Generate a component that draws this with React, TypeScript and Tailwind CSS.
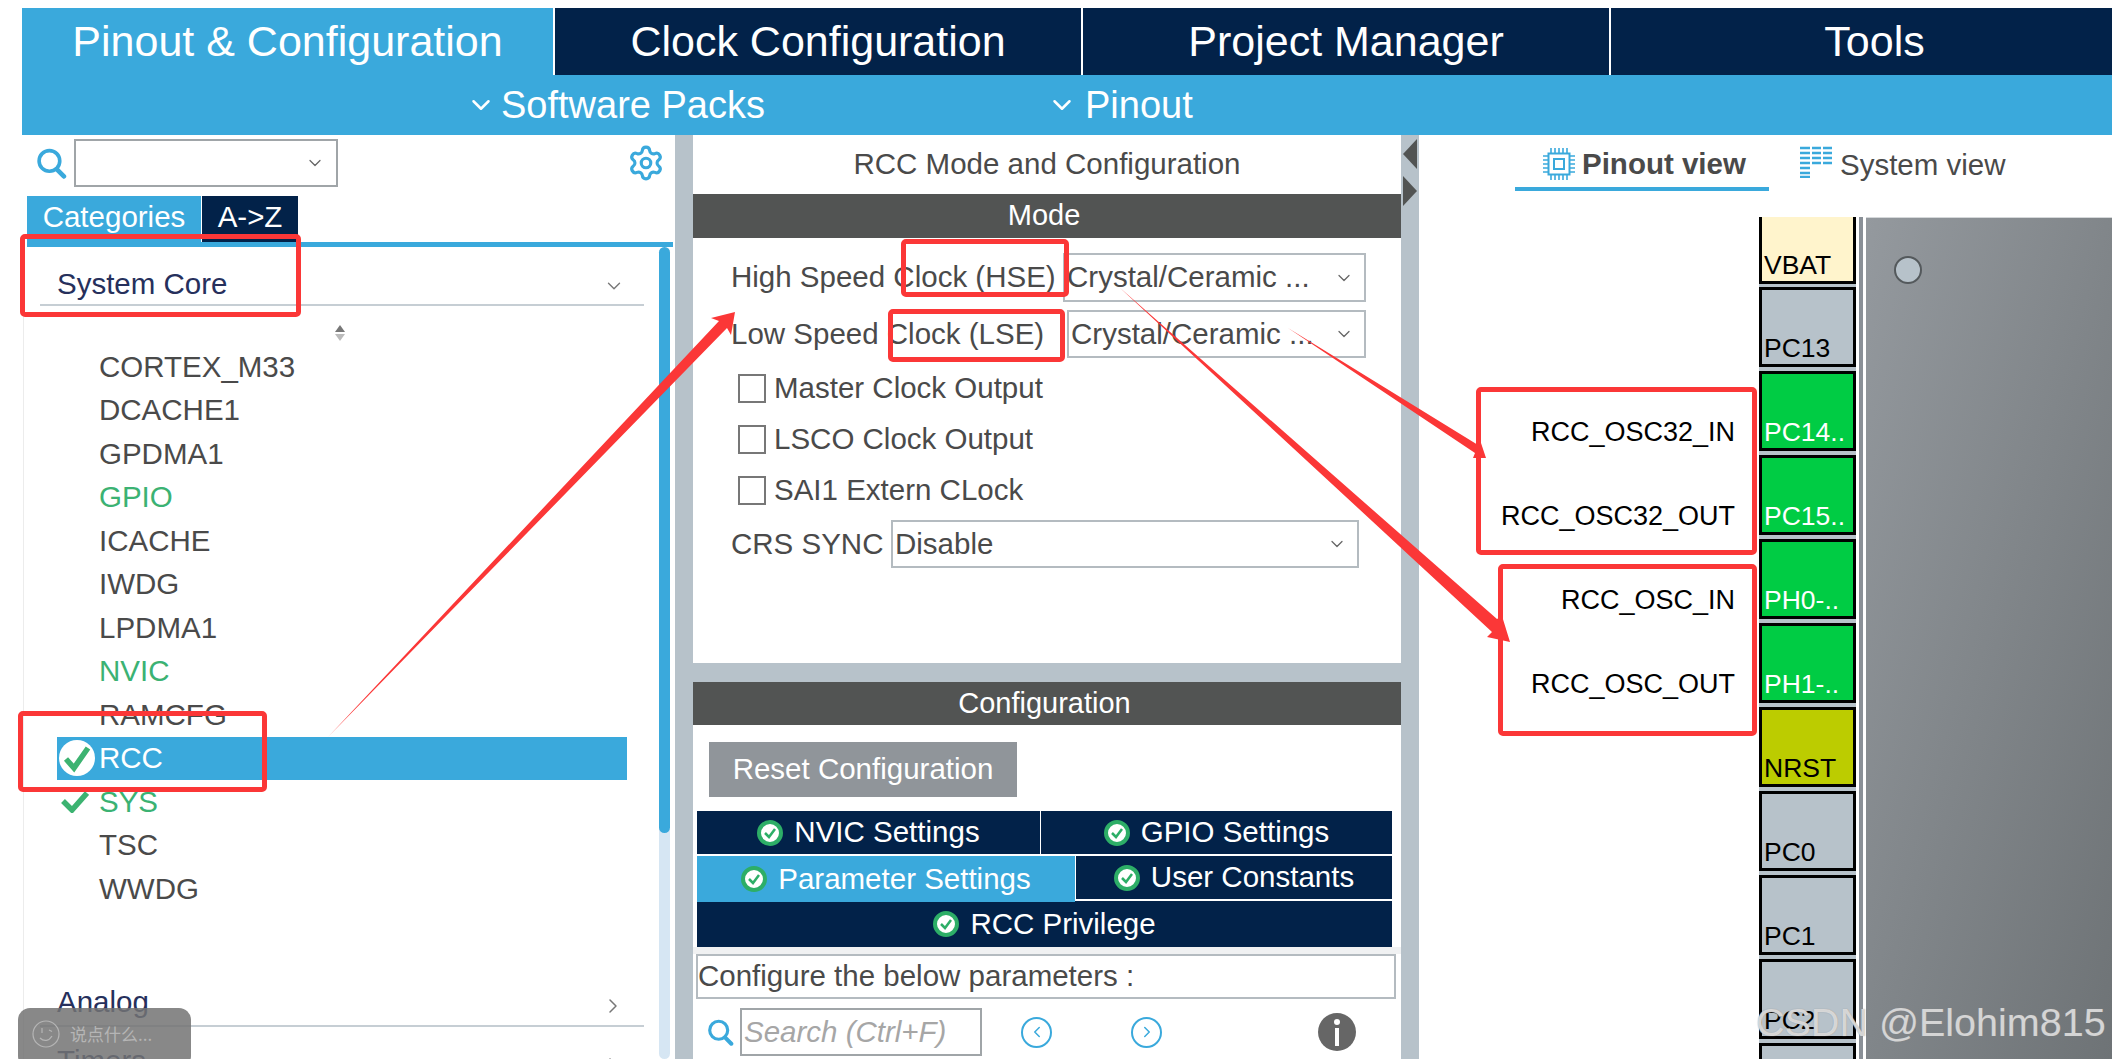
import { ChevronDown, ChevronLeft, ChevronRight, Settings } from 'lucide-react';

const peripherals = [
  { name: 'CORTEX_M33' },
  { name: 'DCACHE1' },
  { name: 'GPDMA1' },
  { name: 'GPIO', green: true },
  { name: 'ICACHE' },
  { name: 'IWDG' },
  { name: 'LPDMA1' },
  { name: 'NVIC', green: true },
  { name: 'RAMCFG' },
  { name: 'RCC', selected: true },
  { name: 'SYS', green: true, checked: true },
  { name: 'TSC' },
  { name: 'WWDG' },
];

const pins = [
  { name: 'VBAT', fill: 'bg-[#fff4cc]', first: true },
  { name: 'PC13', fill: 'bg-[#b7c2ca]' },
  { name: 'PC14..', fill: 'bg-[#00cc44]', light: true, signal: 'RCC_OSC32_IN' },
  { name: 'PC15..', fill: 'bg-[#00cc44]', light: true, signal: 'RCC_OSC32_OUT' },
  { name: 'PH0-..', fill: 'bg-[#00cc44]', light: true, signal: 'RCC_OSC_IN' },
  { name: 'PH1-..', fill: 'bg-[#00cc44]', light: true, signal: 'RCC_OSC_OUT' },
  { name: 'NRST', fill: 'bg-[#bccc00]' },
  { name: 'PC0', fill: 'bg-[#b7c2ca]' },
  { name: 'PC1', fill: 'bg-[#b7c2ca]' },
  { name: 'PC2', fill: 'bg-[#b7c2ca]' },
  { name: '', fill: 'bg-[#b7c2ca]' },
];

function SearchIcon({ className }: { className: string }) {
  return (
    <svg viewBox="0 0 30 30" className={className} fill="none" stroke="#3aa9dc">
      <circle cx="13" cy="13" r="10" strokeWidth="3.5" />
      <path d="M20 21l7 7" strokeWidth="4.5" strokeLinecap="round" />
    </svg>
  );
}

function ChipIcon() {
  return (
    <svg viewBox="0 0 32 32" className="w-[32px] h-[32px] shrink-0" fill="none" stroke="#3aa9dc">
      <rect x="5.5" y="5.5" width="21" height="21" strokeWidth="2" />
      <rect x="11" y="11" width="10" height="10" strokeWidth="2" />
      <path
        d="M8 0v5M12 0v5M16 0v5M20 0v5M24 0v5M8 27v5M12 27v5M16 27v5M20 27v5M24 27v5M0 8h5M0 12h5M0 16h5M0 20h5M0 24h5M27 8h5M27 12h5M27 16h5M27 20h5M27 24h5"
        strokeWidth="1.6"
      />
    </svg>
  );
}

function SystemIcon() {
  return (
    <svg viewBox="0 0 32 32" className="w-[32px] h-[32px] shrink-0 mb-[6px]" stroke="#3aa9dc" strokeWidth="2.4">
      <path d="M0 2h10M0 7h10M0 12h10M0 17h10M0 22h10M0 27h10M0 31h10" />
      <path d="M12 2h9M12 7h9M12 12h9M12 17h9" />
      <path d="M23 2h9M23 7h9M23 12h9M23 17h9" />
    </svg>
  );
}

function GreenDot() {
  return (
    <svg viewBox="0 0 26 26" className="w-[26px] h-[26px] shrink-0">
      <circle cx="13" cy="13" r="11" fill="#fff" stroke="#2dae67" strokeWidth="4" />
      <path d="M8 13l4 4 6-8" fill="none" stroke="#2dae67" strokeWidth="2.5" />
    </svg>
  );
}

function SelectBox({ value, className }: { value: string; className: string }) {
  return (
    <div className={`flex items-center justify-between border-2 border-[#b4bbc0] pl-[2px] pr-[10px] ${className}`}>
      <span className="truncate">{value}</span>
      <ChevronDown className="w-[20px] h-[20px] text-[#666] shrink-0" strokeWidth={1.5} />
    </div>
  );
}

function CategoryRow({ name, open }: { name: string; open?: boolean }) {
  return (
    <div
      className={`flex items-end justify-between h-[59px] ml-[16px] w-[604px] border-b-2 border-[#c6ced4] pl-[17px] pr-[19px] ${open ? 'pb-[4px]' : 'pb-[7px]'}`}
    >
      <span className="text-[29.5px] leading-[32px] text-[#26305c]">{name}</span>
      {open ? (
        <ChevronDown className="w-[22px] h-[22px] text-[#777] mb-[3px]" strokeWidth={1.5} />
      ) : (
        <ChevronRight className="w-[24px] h-[24px] text-[#777]" strokeWidth={1.5} />
      )}
    </div>
  );
}

function CheckRow({ label, className }: { label: string; className: string }) {
  return (
    <div className={`flex items-center gap-[8px] h-[29px] pl-[45px] ${className}`}>
      <div className="w-[28px] h-[29px] border-2 border-[#777]" />
      <span>{label}</span>
    </div>
  );
}

function ConfigTab({ label, className }: { label: string; className: string }) {
  return (
    <div className={`flex items-center justify-center gap-[11px] text-white ${className}`}>
      <GreenDot />
      <span>{label}</span>
    </div>
  );
}

function Annotations() {
  return (
    <>
      <svg className="absolute left-0 top-0 w-[2112px] h-[1059px] pointer-events-none" viewBox="0 0 2112 1059">
        <polygon points="328,737 719,321 711,318 735,312 731,335 727,328" fill="#fb3737" />
        <polygon points="1119,287 1497,619 1502,616 1510,642 1487,637 1492,632" fill="#fb3737" />
        <polygon points="1288,328 1478,445 1481,443 1486,458 1473,458 1475,453" fill="#fb3737" />
      </svg>
      <div className="absolute left-[20px] top-[234px] w-[281px] h-[83px] border-[5px] border-[#fb3737] rounded-[5px]" />
      <div className="absolute left-[18px] top-[711px] w-[249px] h-[81px] border-[5px] border-[#fb3737] rounded-[5px]" />
      <div className="absolute left-[901px] top-[239px] w-[168px] h-[58px] border-[5px] border-[#fb3737] rounded-[5px]" />
      <div className="absolute left-[888px] top-[309px] w-[177px] h-[53px] border-[5px] border-[#fb3737] rounded-[5px]" />
      <div className="absolute left-[1476px] top-[387px] w-[281px] h-[168px] border-[5px] border-[#fb3737] rounded-[5px]" />
      <div className="absolute left-[1498px] top-[564px] w-[259px] h-[172px] border-[5px] border-[#fb3737] rounded-[5px]" />
    </>
  );
}

export default function App() {
  return (
    <div className="relative w-[2112px] h-[1059px] overflow-hidden bg-white pt-[8px] pl-[22px] font-['Liberation_Sans',sans-serif] text-[#4a4a4a]">
      {/* top tabs */}
      <div className="flex h-[67px] text-[43px] text-white">
        <div className="flex items-center justify-center w-[531px] bg-[#3aa9dc]">Pinout &amp; Configuration</div>
        <div className="flex items-center justify-center w-[526px] ml-[2px] bg-[#022249]">Clock Configuration</div>
        <div className="flex items-center justify-center w-[526px] ml-[2px] bg-[#022249]">Project Manager</div>
        <div className="flex items-center justify-center flex-1 ml-[2px] pl-[26px] bg-[#022249]">Tools</div>
      </div>
      <div className="flex items-center h-[60px] bg-[#3aa9dc] text-[38px] text-white">
        <ChevronDown className="w-[30px] h-[30px] ml-[444px]" strokeWidth={2} />
        <span className="ml-[5px]">Software Packs</span>
        <ChevronDown className="w-[30px] h-[30px] ml-[282px]" strokeWidth={2} />
        <span className="ml-[8px]">Pinout</span>
      </div>

      <div className="flex h-[924px]">
        {/* left column */}
        <div className="w-[653px] h-full flex flex-col overflow-hidden">
          <div className="flex items-center pt-[4px] pl-[14px] pr-[10px]">
            <SearchIcon className="w-[31px] h-[32px]" />
            <div className="flex items-center justify-end w-[264px] h-[48px] ml-[7px] border-2 border-[#a0a5a8] pr-[11px]">
              <ChevronDown className="w-[20px] h-[20px] text-[#666]" strokeWidth={1.5} />
            </div>
            <Settings className="w-[38px] h-[38px] ml-auto text-[#3aa9dc]" strokeWidth={2} />
          </div>
          <div className="flex mt-[9px] ml-[5px] h-[46px] text-[29.5px] text-white">
            <div className="flex items-center justify-center w-[174px] pb-[3px] bg-[#3aa9dc]">Categories</div>
            <div className="flex items-center justify-center w-[96px] ml-[1px] pb-[3px] bg-[#022249]">A-&gt;Z</div>
          </div>
          <div className="h-[5px] ml-[5px] mr-[2px] bg-[#3aa9dc]" />
          <div className="flex flex-1 min-h-0 ml-[1px] border-l border-[#ececec]">
            <div className="w-[635px] h-full">
              <CategoryRow name="System Core" open />
              <div className="flex flex-col items-center gap-[2px] w-[634px] mt-[19px] pr-[2px] h-[17px]">
                <div className="w-0 h-0 border-x-[5px] border-x-transparent border-b-[7px] border-b-[#777]" />
                <div className="w-0 h-0 border-x-[5px] border-x-transparent border-t-[7px] border-t-[#bbb]" />
              </div>
              <div className="mt-[3px] ml-[33px] w-[570px]">
                {peripherals.map((item) => (
                  <div
                    key={item.name}
                    className={`flex items-center h-[43.5px] text-[29.5px] ${item.selected ? 'bg-[#3aa9dc] text-white' : item.green ? 'text-[#3bb273]' : ''}`}
                  >
                    <div className="flex items-center justify-center w-[42px] shrink-0">
                      {item.selected && (
                        <svg viewBox="0 0 36 36" className="w-[36px] h-[36px] mr-[3px]">
                          <circle cx="18" cy="18" r="18" fill="#fff" />
                          <path d="M7 19l8 9 14-20" fill="none" stroke="#3cb371" strokeWidth="5.5" />
                        </svg>
                      )}
                      {item.checked && (
                        <svg viewBox="0 0 28 22" className="w-[28px] h-[22px] mr-[6px]">
                          <path d="M2 10l9 9L26 2" fill="none" stroke="#3cb371" strokeWidth="5.5" />
                        </svg>
                      )}
                    </div>
                    <span>{item.name}</span>
                  </div>
                ))}
              </div>
              <div className="mt-[57px]">
                <CategoryRow name="Analog" />
                <CategoryRow name="Timers" />
              </div>
            </div>
            <div className="w-[11px] h-full rounded-full bg-[#d6e6f3]">
              <div className="h-[586px] rounded-full bg-[#3aa9dc]" />
            </div>
          </div>
        </div>

        <div className="w-[18px] bg-[#b7c2ca]" />

        {/* mode and configuration */}
        <div className="w-[708px] h-full flex flex-col text-[29.5px]">
          <div className="flex items-center justify-center h-[59px]">RCC Mode and Configuration</div>
          <div className="flex items-center justify-center h-[44px] pr-[6px] bg-[#525453] text-[29px] text-white">Mode</div>
          <div className="h-[425px]">
            <div className="flex items-center mt-[15px] pl-[38px]">
              <span className="w-[332px] shrink-0">High Speed Clock (HSE)</span>
              <SelectBox value="Crystal/Ceramic ..." className="w-[303px] h-[49px]" />
            </div>
            <div className="flex items-center mt-[8px] pl-[38px]">
              <span className="w-[336px] shrink-0">Low Speed Clock (LSE)</span>
              <SelectBox value="Crystal/Ceramic ..." className="w-[299px] h-[48px]" />
            </div>
            <CheckRow label="Master Clock Output" className="mt-[16px]" />
            <CheckRow label="LSCO Clock Output" className="mt-[22px]" />
            <CheckRow label="SAI1 Extern CLock" className="mt-[22px]" />
            <div className="flex items-center mt-[15px] pl-[38px]">
              <span className="w-[160px] shrink-0">CRS SYNC</span>
              <SelectBox value="Disable" className="w-[468px] h-[48px]" />
            </div>
          </div>
          <div className="h-[19px] bg-[#b7c2ca]" />
          <div className="flex items-center justify-center h-[43px] pr-[5px] bg-[#525453] text-[29px] text-white">Configuration</div>
          <div className="flex items-center justify-center w-[308px] h-[55px] mt-[17px] ml-[16px] bg-[#90959a] text-white">
            Reset Configuration
          </div>
          <div className="w-[695px] mt-[14px] ml-[4px]">
            <div className="flex h-[43px]">
              <ConfigTab label="NVIC Settings" className="w-[343px] bg-[#022249]" />
              <ConfigTab label="GPIO Settings" className="flex-1 ml-[1px] bg-[#022249]" />
            </div>
            <div className="flex items-start h-[45px] mt-[2px]">
              <ConfigTab label="Parameter Settings" className="w-[378px] h-[46px] bg-[#3aa9dc]" />
              <ConfigTab label="User Constants" className="flex-1 h-[43px] ml-[1px] bg-[#022249]" />
            </div>
            <ConfigTab label="RCC Privilege" className="h-[46px] bg-[#022249]" />
          </div>
          <div className="h-[7px] bg-[#f0f1f2]" />
          <div className="flex items-center w-[700px] h-[45px] ml-[3px] border-2 border-[#b4bbc0]">
            Configure the below parameters :
          </div>
          <div className="flex items-center mt-[9px] pl-[14px]">
            <SearchIcon className="w-[27px] h-[28px]" />
            <div className="flex items-center w-[242px] h-[48px] ml-[6px] border-2 border-[#a0a5a8] pl-[2px] italic text-[#a6a6a6]">
              Search (Ctrl+F)
            </div>
            <div className="flex items-center justify-center w-[31px] h-[31px] ml-[39px] rounded-full border-2 border-[#3aa9dc]">
              <ChevronLeft className="w-[18px] h-[18px] text-[#3aa9dc]" strokeWidth={2} />
            </div>
            <div className="flex items-center justify-center w-[31px] h-[31px] ml-[79px] rounded-full border-2 border-[#3aa9dc]">
              <ChevronRight className="w-[18px] h-[18px] text-[#3aa9dc]" strokeWidth={2} />
            </div>
            <svg viewBox="0 0 38 38" className="w-[38px] h-[38px] ml-[156px]">
              <circle cx="19" cy="19" r="19" fill="#666" />
              <circle cx="19" cy="9" r="3" fill="#fff" />
              <rect x="17" y="15" width="4" height="18" fill="#fff" />
            </svg>
          </div>
        </div>

        <div className="relative w-[18px] bg-[#b7c2ca]">
          <div className="absolute left-[2px] top-[4px] w-0 h-0 border-y-[15px] border-y-transparent border-r-[14px] border-r-[#525453]" />
          <div className="absolute left-[2px] top-[41px] w-0 h-0 border-y-[15px] border-y-transparent border-l-[14px] border-l-[#525453]" />
        </div>

        {/* pinout view */}
        <div className="flex-1 h-full flex flex-col overflow-hidden">
          <div className="flex h-[56px] text-[29.5px]">
            <div className="flex items-center w-[254px] ml-[96px] border-b-4 border-[#3aa9dc] pl-[28px] pt-[6px] font-bold">
              <ChipIcon />
              <span className="ml-[7px]">Pinout view</span>
            </div>
            <div className="flex items-center ml-[31px] pt-[4px]">
              <SystemIcon />
              <span className="ml-[8px]">System view</span>
            </div>
          </div>
          <div className="flex flex-1 min-h-0 mt-[26px] overflow-hidden">
            <div className="w-[340px] shrink-0">
              {pins.map((pin) => (
                <div
                  key={pin.name + pin.fill}
                  className={`flex items-end justify-end pr-[24px] pb-[8px] text-[27px] leading-[30px] text-black ${pin.first ? 'h-[70px]' : 'h-[84px]'}`}
                >
                  {pin.signal}
                </div>
              ))}
            </div>
            <div className="w-[97px] shrink-0 bg-[#b7c2ca]">
              {pins.map((pin) => (
                <div
                  key={pin.name + pin.fill}
                  className={`flex items-end border-[3px] border-black pl-[2px] pb-[1px] text-[26.5px] leading-[30px] overflow-hidden ${pin.fill} ${pin.light ? 'text-white' : 'text-black'} ${pin.first ? 'h-[67px] border-t-0 mb-[3px]' : 'h-[80px] mb-[4px]'}`}
                >
                  {pin.name}
                </div>
              ))}
            </div>
            <div className="w-[3px] shrink-0 bg-white" />
            <div className="w-[4px] shrink-0 bg-[#8a9097]" />
            <div className="w-[3px] shrink-0 bg-white" />
            <div className="flex-1 pl-[28px] pt-[38px] border-t border-[#d5d8da] bg-gradient-to-br from-[#94999e] to-[#6e7376]">
              <div className="w-[28px] h-[28px] rounded-full border-2 border-[#54595c] bg-[#b7c2ca]" />
            </div>
          </div>
        </div>
      </div>

      <Annotations />

      {/* comment bubble and watermark */}
      <div className="absolute left-[18px] top-[1008px] flex items-center w-[173px] h-[60px] pb-[9px] pl-[14px] rounded-[12px] bg-[#737373]/85 text-[#b5b5b5]">
        <svg viewBox="0 0 28 28" className="w-[28px] h-[28px]" fill="none" stroke="#b5b5b5" strokeWidth="1.2">
          <circle cx="14" cy="14" r="13" />
          <path d="M10 8v5M17 10l3 1.5M8 18c4 4 9 3 12-2" />
        </svg>
        <span className="ml-[10px] text-[17px] font-['Noto_Sans_CJK_SC',sans-serif]">说点什么...</span>
      </div>
      <div className="absolute left-[1756px] top-[999px] text-[39.5px] leading-[46px] whitespace-nowrap text-white/65 [text-shadow:0_0_1px_#888]">
        CSDN @Elohim815
      </div>
    </div>
  );
}
